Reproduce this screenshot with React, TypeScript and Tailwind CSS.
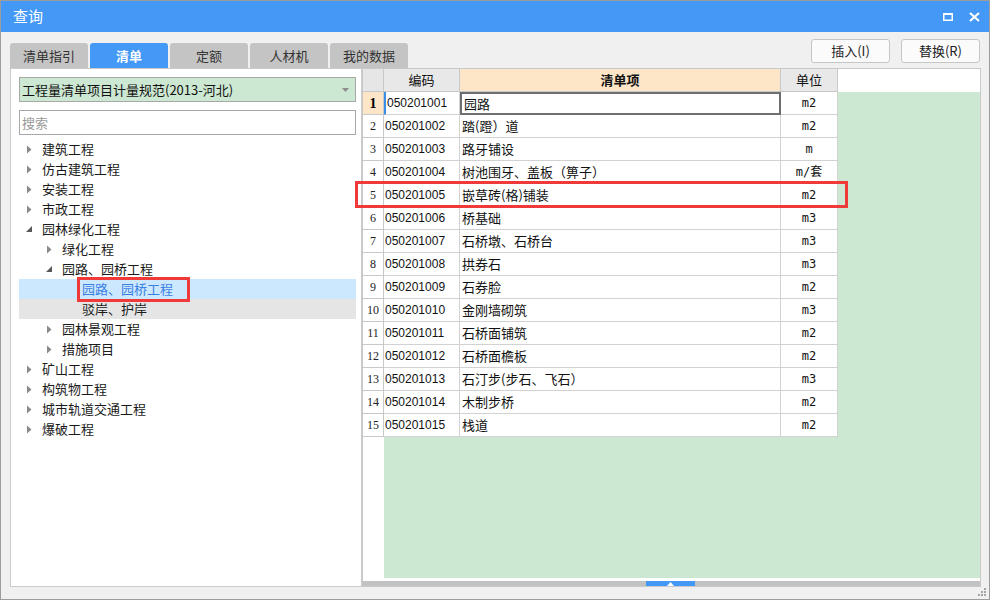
import React from "react";

type TreeNode = { label: string; level: number; state: "closed" | "open" | "leaf"; selected?: boolean; hover?: boolean };

const tree: TreeNode[] = [
  { label: "建筑工程", level: 0, state: "closed" },
  { label: "仿古建筑工程", level: 0, state: "closed" },
  { label: "安装工程", level: 0, state: "closed" },
  { label: "市政工程", level: 0, state: "closed" },
  { label: "园林绿化工程", level: 0, state: "open" },
  { label: "绿化工程", level: 1, state: "closed" },
  { label: "园路、园桥工程", level: 1, state: "open" },
  { label: "园路、园桥工程", level: 2, state: "leaf", selected: true },
  { label: "驳岸、护岸", level: 2, state: "leaf", hover: true },
  { label: "园林景观工程", level: 1, state: "closed" },
  { label: "措施项目", level: 1, state: "closed" },
  { label: "矿山工程", level: 0, state: "closed" },
  { label: "构筑物工程", level: 0, state: "closed" },
  { label: "城市轨道交通工程", level: 0, state: "closed" },
  { label: "爆破工程", level: 0, state: "closed" },
];

const rows = [
  ["050201001", "园路", "m2"],
  ["050201002", "踏(蹬）道", "m2"],
  ["050201003", "路牙铺设", "m"],
  ["050201004", "树池围牙、盖板（箅子）", "m/套"],
  ["050201005", "嵌草砖(格)铺装", "m2"],
  ["050201006", "桥基础", "m3"],
  ["050201007", "石桥墩、石桥台", "m3"],
  ["050201008", "拱券石", "m3"],
  ["050201009", "石券脸", "m2"],
  ["050201010", "金刚墙砌筑", "m3"],
  ["050201011", "石桥面铺筑", "m2"],
  ["050201012", "石桥面檐板", "m2"],
  ["050201013", "石汀步(步石、飞石）", "m3"],
  ["050201014", "木制步桥", "m2"],
  ["050201015", "栈道", "m2"],
];

const tabs = ["清单指引", "清单", "定额", "人材机", "我的数据"];

function Arrow({ state }: { state: TreeNode["state"] }) {
  if (state === "leaf") return <span className="w-[8px]" />;
  if (state === "open")
    return (
      <svg width="8" height="8" viewBox="0 0 8 8">
        <polygon points="7,1 7,7 1,7" fill="#595959" />
      </svg>
    );
  return (
    <svg width="8" height="9" viewBox="0 0 8 9">
      <polygon points="2,0.5 6.5,4.5 2,8.5" fill="#8a8a8a" />
    </svg>
  );
}

function TreeRow({ node }: { node: TreeNode }) {
  const bg = node.selected ? "bg-[#cce8ff]" : node.hover ? "bg-[#e5e5e5]" : "";
  return (
    <div className={`h-[20px] flex items-center ${bg}`} style={{ paddingLeft: 6 + node.level * 20 }}>
      <span className="w-[17px] flex items-center">
        <Arrow state={node.state} />
      </span>
      <span className={`text-[13px] leading-none -mt-[1px] ${node.selected ? "text-[#3a7fe4]" : "text-[#1a1a1a]"}`}>{node.label}</span>
    </div>
  );
}

export default function App() {
  return (
    <div className="w-[990px] h-[600px] border border-[#9c9c9c] bg-[#f0f0f0] flex flex-col font-['Noto_Sans_CJK_SC',sans-serif] select-none">
      {/* title bar */}
      <div className="h-[31px] bg-[#4499f7] flex items-center justify-between pl-[12px] pr-[9px] text-white">
        <span className="text-[15px]">查询</span>
        <div className="flex items-center gap-[16px]">
          <svg width="10" height="8" viewBox="0 0 10 8">
            <rect x="0.75" y="1" width="8.5" height="6.25" fill="none" stroke="#fff" strokeWidth="1.5" />
            <rect x="0" y="0" width="10" height="2" fill="#fff" />
          </svg>
          <svg width="11" height="10" viewBox="0 0 11 10">
            <path d="M1 1 L10 9 M10 1 L1 9" stroke="#fff" strokeWidth="2.2" />
          </svg>
        </div>
      </div>

      {/* tabs + buttons */}
      <div className="h-[36px] flex justify-between pl-[9px] pr-[9px]">
        <div className="flex items-end gap-[2px]">
          {tabs.map((t) => (
            <div
              key={t}
              className={`w-[78px] h-[25px] rounded-t-[3px] flex items-center justify-center text-[13px] ${
                t === "清单" ? "bg-[#4499f7] text-white font-bold" : "bg-[#c4c4c4] text-[#333]"
              }`}
            >
              {t}
            </div>
          ))}
        </div>
        <div className="flex gap-[11px] pt-[7px]">
          <button className="w-[79px] h-[24px] rounded-[3px] border border-[#c6c6c6] bg-[#fbfbfb] text-[13px] text-[#222]">插入(I)</button>
          <button className="w-[79px] h-[24px] rounded-[3px] border border-[#c6c6c6] bg-[#fbfbfb] text-[13px] text-[#222]">替换(R)</button>
        </div>
      </div>

      {/* panels */}
      <div className="relative flex h-[519px] pl-[9px]">
        {/* left panel */}
        <div className="w-[352px] h-full border border-[#cbcbcb] bg-white pt-[8px] pl-[8px] pr-[5px] flex flex-col">
          <div className="h-[25px] border border-[#a8a8a8] bg-[#cde8d2] flex items-center justify-between pl-[2px] pr-[6px]">
            <span className="text-[13px] text-[#111]">工程量清单项目计量规范(2013-河北)</span>
            <svg width="7" height="4" viewBox="0 0 7 4">
              <polygon points="0,0 7,0 3.5,4" fill="#8c8c8c" />
            </svg>
          </div>
          <div className="h-[25px] mt-[8px] border border-[#a8a8a8] bg-white flex items-center pl-[2px]">
            <span className="text-[13px] text-[#9a9a9a]">搜索</span>
          </div>
          <div className="mt-[4px] flex flex-col">
            {tree.map((n, i) => (
              <TreeRow key={i} node={n} />
            ))}
          </div>
        </div>

        {/* right panel */}
        <div className="w-[619px] h-full border border-[#c8c8c8] bg-white flex flex-col">
          {/* header */}
          <div className="h-[23px] flex text-[13px] text-[#111]">
            <div className="w-[21px] bg-[#e6e6e6] border-r border-b border-[#c8c8c8]" />
            <div className="w-[76px] bg-[#e8e8e8] border-r border-b border-[#c8c8c8] flex items-center justify-center">编码</div>
            <div className="w-[321px] bg-[#fde6c8] border-r border-b border-[#c8c8c8] flex items-center justify-center font-bold">清单项</div>
            <div className="w-[57px] bg-[#e8e8e8] border-r border-b border-[#c8c8c8] flex items-center justify-center">单位</div>
            <div className="flex-1" />
          </div>

          {/* body */}
          <div className="h-[486px] flex">
            <div className="w-[21px] flex flex-col bg-white">
              {rows.map((_, i) => (
                <div
                  key={i}
                  className={`h-[23px] border-r border-b border-[#c8c8c8] flex items-center justify-center font-['Liberation_Serif',serif] ${
                    i === 0 ? "bg-[#fde6c8] font-bold text-[14px]" : "text-[12px] text-[#222]"
                  }`}
                >
                  {i + 1}
                </div>
              ))}
            </div>
            <div className="flex-1 bg-[#cde8d2] flex flex-col">
              {rows.map(([code, name, unit], i) => (
                <div key={code} className="h-[23px] flex bg-[#cde8d2]">
                  <div
                    className={`w-[76px] bg-white border-r border-b border-[#d2d2d2] flex items-center pl-[1px] text-[12px] text-[#111] font-['Liberation_Sans',sans-serif] ${
                      i === 0 ? "border-l-2 border-l-[#3a8ee6]" : ""
                    }`}
                  >
                    {code}
                  </div>
                  <div
                    className={`w-[321px] bg-white flex items-center pl-[2px] text-[13px] text-[#111] ${
                      i === 0 ? "border-2 border-[#6e6e6e]" : "border-r border-b border-[#d2d2d2]"
                    }`}
                  >
                    {name}
                  </div>
                  <div className="w-[57px] bg-white border-r border-b border-[#d2d2d2] flex items-center justify-center text-[12px] text-[#111] font-['DejaVu_Sans_Mono','Noto_Sans_CJK_SC',monospace]">
                    {unit}
                  </div>
                </div>
              ))}
            </div>
          </div>

          <div className="h-[3px]" />
          {/* horizontal scroller */}
          <div className="h-[5px] bg-[#c2c2c2] flex">
            <div className="ml-[283px] w-[49px] h-full bg-[#4499f7] flex items-center justify-center">
              <svg width="7" height="4" viewBox="0 0 7 4">
                <polygon points="3.5,0 7,4 0,4" fill="#fff" />
              </svg>
            </div>
          </div>
        </div>

        {/* highlight boxes */}
        <div className="absolute left-[76px] top-[209px] w-[113px] h-[25px] border-[3px] border-[#f03a3a]" />
        <div className="absolute left-[354px] top-[113px] w-[493px] h-[27px] border-[3px] border-[#f03a3a]" />
      </div>

      {/* bottom strip with grip */}
      <div className="flex-1 flex justify-end items-start pr-[2px] pt-[1px]">
        <svg width="9" height="9" viewBox="0 0 9 9">
          <rect x="6" y="0" width="2" height="2" fill="#a5a5a5" />
          <rect x="3" y="3" width="2" height="2" fill="#a5a5a5" />
          <rect x="6" y="3" width="2" height="2" fill="#a5a5a5" />
          <rect x="0" y="6" width="2" height="2" fill="#a5a5a5" />
          <rect x="3" y="6" width="2" height="2" fill="#a5a5a5" />
          <rect x="6" y="6" width="2" height="2" fill="#a5a5a5" />
        </svg>
      </div>
    </div>
  );
}
